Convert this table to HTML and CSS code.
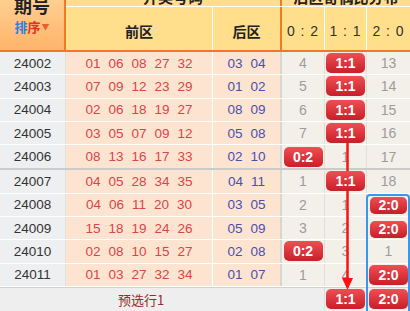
FILE: index.html
```html
<!DOCTYPE html>
<html lang="zh">
<head>
<meta charset="utf-8">
<link rel="stylesheet" href="styles.css">
</head>
<body>
<div class="sheet">
  <div class="head">
    <div class="h-issue">
      <div class="t1">期号</div>
      <div class="t2"><span class="blue">排</span><span class="red">序</span><span class="tri">▼</span></div>
    </div>
    <div class="h-right">
      <div class="h-top">
        <div class="h-draw">开奖号码</div>
        <div class="h-dist">后区奇偶比分布</div>
      </div>
      <div class="h-sub">
        <div class="hb">前区</div>
        <div class="hc">后区</div>
        <div class="hd">0 : 2</div>
        <div class="he">1 : 1</div>
        <div class="hf">2 : 0</div>
      </div>
    </div>
  </div>

  <div class="row">
    <div class="a">24002</div>
    <div class="b"><span>01</span><span>06</span><span>08</span><span>27</span><span>32</span></div>
    <div class="c"><span>03</span><span>04</span></div>
    <div class="d">4</div><div class="e"><span class="bd">1:1</span></div><div class="f">13</div>
  </div>
  <div class="row">
    <div class="a">24003</div>
    <div class="b"><span>07</span><span>09</span><span>12</span><span>23</span><span>29</span></div>
    <div class="c"><span>01</span><span>02</span></div>
    <div class="d">5</div><div class="e"><span class="bd">1:1</span></div><div class="f">14</div>
  </div>
  <div class="row">
    <div class="a">24004</div>
    <div class="b"><span>02</span><span>06</span><span>18</span><span>19</span><span>27</span></div>
    <div class="c"><span>08</span><span>09</span></div>
    <div class="d">6</div><div class="e"><span class="bd">1:1</span></div><div class="f">15</div>
  </div>
  <div class="row">
    <div class="a">24005</div>
    <div class="b"><span>03</span><span>05</span><span>07</span><span>09</span><span>12</span></div>
    <div class="c"><span>05</span><span>08</span></div>
    <div class="d">7</div><div class="e"><span class="bd">1:1</span></div><div class="f">16</div>
  </div>
  <div class="row group-end">
    <div class="a">24006</div>
    <div class="b"><span>08</span><span>13</span><span>16</span><span>17</span><span>33</span></div>
    <div class="c"><span>02</span><span>10</span></div>
    <div class="d"><span class="bd">0:2</span></div><div class="e">1</div><div class="f">17</div>
  </div>
  <div class="row">
    <div class="a">24007</div>
    <div class="b"><span>04</span><span>05</span><span>28</span><span>34</span><span>35</span></div>
    <div class="c"><span>04</span><span>11</span></div>
    <div class="d">1</div><div class="e"><span class="bd">1:1</span></div><div class="f">18</div>
  </div>
  <div class="row">
    <div class="a">24008</div>
    <div class="b"><span>04</span><span>06</span><span>11</span><span>20</span><span>30</span></div>
    <div class="c"><span>03</span><span>05</span></div>
    <div class="d">2</div><div class="e">1</div><div class="f"><span class="bd sm">2:0</span></div>
  </div>
  <div class="row">
    <div class="a">24009</div>
    <div class="b"><span>15</span><span>18</span><span>19</span><span>24</span><span>26</span></div>
    <div class="c"><span>05</span><span>09</span></div>
    <div class="d">3</div><div class="e">2</div><div class="f"><span class="bd sm">2:0</span></div>
  </div>
  <div class="row">
    <div class="a">24010</div>
    <div class="b"><span>02</span><span>08</span><span>10</span><span>15</span><span>27</span></div>
    <div class="c"><span>02</span><span>08</span></div>
    <div class="d"><span class="bd">0:2</span></div><div class="e">3</div><div class="f">1</div>
  </div>
  <div class="row">
    <div class="a">24011</div>
    <div class="b"><span>01</span><span>03</span><span>27</span><span>32</span><span>34</span></div>
    <div class="c"><span>01</span><span>07</span></div>
    <div class="d">1</div><div class="e">4</div><div class="f"><span class="bd">2:0</span></div>
  </div>
  <div class="row pre">
    <div class="pre-label">预选行1</div>
    <div class="d"></div><div class="e"><span class="bd">1:1</span></div><div class="f"><span class="bd">2:0</span></div>
  </div>

  <svg class="trend" width="410" height="340" viewBox="0 0 410 340">
    <line x1="347.5" y1="159" x2="347.5" y2="297" stroke="#ff1010" stroke-width="2.5"/>
    <polygon points="342,294 353,294 347.5,306" fill="#ff1010"/>
  </svg>
  <div class="sel"></div>
</div>
</body>
</html>
```

FILE: styles.css
```css
html, body {
  margin: 0;
  padding: 0;
  background: #fff;
  overflow: hidden;
}
body {
  font-family: "Liberation Sans", Arial, "Noto Sans CJK SC", sans-serif;
}
.sheet {
  position: relative;
  width: 410px;
  margin-top: -16px;
}
.head {
  display: flex;
  height: 68px;
}
.h-issue {
  width: 66px;
  box-sizing: border-box;
  border-right: 2px solid #f07a22;
  border-bottom: 2px solid #f07a22;
  background: linear-gradient(#ffd79c, #ffb46a);
  text-align: center;
}
.h-issue .t1 {
  margin-top: 11px;
  font: bold 18px/20px "Noto Sans CJK SC", sans-serif;
  color: #222;
}
.h-issue .t2 {
  margin-top: 3px;
  font: bold 13px/18px "Noto Sans CJK SC", sans-serif;
}
.blue { color: #2f7de1; }
.red { color: #e0302a; }
.tri { color: #e8602a; font-size: 8px; vertical-align: 2px; margin-left: 1px; }
.h-right {
  width: 344px;
  display: flex;
  flex-direction: column;
}
.h-top {
  display: flex;
  height: 23px;
  box-sizing: border-box;
  border-bottom: 1px solid #fff;
  background: #ffdf8c;
  font: bold 15px/22px "Noto Sans CJK SC", sans-serif;
  color: #222;
}
.h-draw {
  width: 216px;
  box-sizing: border-box;
  border-right: 2px solid #f07a22;
  text-align: center;
  padding-top: 2px;
}
.h-dist {
  flex: 1;
  text-align: center;
  padding-top: 2px;
}
.h-sub {
  display: flex;
  height: 45px;
  box-sizing: border-box;
  border-bottom: 2px solid #f07a22;
  background: #ffdf8c;
  color: #222;
}
.h-sub > div {
  box-sizing: border-box;
  display: flex;
  align-items: center;
  justify-content: center;
  padding-top: 5px;
}
.hb, .hc {
  font: bold 14px "Noto Sans CJK SC", sans-serif;
}
.hb { width: 147px; border-right: 1px solid #fff; }
.hc { width: 69px; border-right: 2px solid #f07a22; }
.hd, .he, .hf {
  font-size: 14px;
  letter-spacing: 1px;
  color: #333;
}
.hd { width: 43px; border-right: 1px solid #fff; }
.he { width: 42px; border-right: 1px solid #fff; }
.hf { width: 43px; }

.row {
  display: flex;
  height: 23.333px;
  box-sizing: border-box;
  border-bottom: 1px solid #fff;
  font-size: 13.5px;
}
.row.group-end {
  height: 25px;
  border-bottom: 2px solid #cbcbcb;
}
.row > div {
  box-sizing: border-box;
  display: flex;
  align-items: center;
  justify-content: center;
}
.a {
  width: 66px;
  background: #eeeff0;
  border-right: 1px solid #e0e0e0;
  color: #333;
}
.b {
  width: 147px;
  background: #fde4d0;
  border-right: 1px solid #fff;
  color: #d9454a;
  gap: 8px;
}
.c {
  width: 69px;
  background: #fde4d0;
  border-right: 2px solid #d6d6d6;
  color: #4a50ad;
  gap: 8px;
}
.d, .e, .f {
  background: #f3f0ea;
  color: #9c9c9c;
  font-size: 14px;
}
.d { width: 43px; border-right: 1px solid #e3dfd7; }
.e { width: 42px; border-right: 1px solid #e3dfd7; }
.f { width: 43px; }

.bd {
  position: relative;
  z-index: 2;
  display: block;
  width: 39px;
  height: 20px;
  border-radius: 5px;
  background: linear-gradient(#f04e54, #c81f28);
  color: #fff;
  font: bold 14px/20px "Liberation Sans", Arial, sans-serif;
  text-align: center;
}
.bd.sm {
  width: 37px;
  height: 17px;
  line-height: 17px;
  margin-top: 2px;
}
.row.pre {
  height: 32px;
  border-bottom: 0;
  border-top: 1px solid #d2d2d2;
  background: #eeeeee;
}
.row.pre > div {
  align-items: flex-start;
  padding-top: 1px;
}
.pre-label {
  width: 282px;
  color: #962b2b;
  font: 13px/20px "Noto Sans CJK SC", sans-serif;
  padding-top: 2px !important;
}
.row.pre .d, .row.pre .e, .row.pre .f {
  background: #eeeeee;
}
.trend {
  position: absolute;
  left: 0;
  top: 0;
  z-index: 1;
  pointer-events: none;
}
.sel {
  position: absolute;
  left: 366px;
  top: 210px;
  width: 44px;
  height: 130px;
  box-sizing: border-box;
  border: 2px solid #3b97ea;
  border-radius: 4px;
  z-index: 3;
  pointer-events: none;
}
```
